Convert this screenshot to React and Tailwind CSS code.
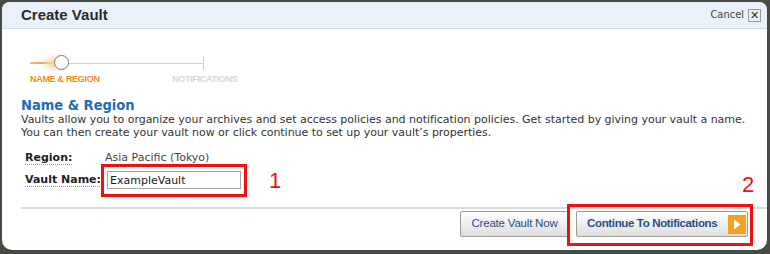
import React from 'react';

const font = { fontFamily: '"DejaVu Sans", sans-serif' };
const arial = { fontFamily: '"Liberation Sans", Arial, sans-serif' };
const cond = { fontFamily: '"DejaVu Sans Condensed", "DejaVu Sans", sans-serif' };

const Progress = () => (
  <div className="relative h-[40px] w-[240px]">
    <div className="absolute left-[9px] top-[12px] h-[2px] w-[26px] bg-gradient-to-r from-[#f7b77a] to-[#f08a1c]" />
    <div className="absolute left-[24px] top-[8px] h-[10px] w-[20px] rounded-full bg-[#fcd2a8] blur-[3px]" />
    <div className="absolute left-[47px] top-[13px] h-[1px] w-[136px] bg-[#cfcfcf]" />
    <div className="absolute left-[182px] top-[6px] h-[14px] w-[1px] bg-[#cfcfcf]" />
    <div className="absolute left-[33px] top-[5px] h-[15px] w-[15px] rounded-full border border-[#777] bg-white" />
    <div className="absolute left-[9px] top-[23px] text-[9px] font-bold tracking-[-0.3px] text-[#f0891c]" style={arial}>NAME &amp; REGION</div>
    <div className="absolute left-[151px] top-[23px] text-[9px] font-bold tracking-[-0.3px] text-[#d6d6d6]" style={arial}>NOTIFICATIONS</div>
  </div>
);

export default function App() {
  return (
    <div className="w-[770px] h-[254px] bg-[#4a4a44] pl-[2px] pr-[3px] pt-[2px] pb-[4px]">
      <div className="relative flex h-full flex-col overflow-hidden rounded-t-[8px] rounded-b-[10px] bg-white text-[#333]" style={font}>
        <div className="flex h-[27px] items-center justify-between border-b border-[#cfdcec] bg-[#e9f1fb] pl-[19px] pr-[6px]">
          <div className="text-[15px] font-bold text-[#2b2b2b]" style={arial}>Create Vault</div>
          <div className="flex items-center gap-[4px]">
            <span className="text-[11px] text-[#444]" style={cond}>Cancel</span>
            <span className="flex h-[13px] w-[13px] items-center justify-center border border-[#9a9a9a] bg-[#eee] text-[11px] leading-none text-[#333]">✕</span>
          </div>
        </div>

        <div className="pl-[19px] pt-[21px]">
          <Progress />
        </div>

        <div className="px-[19px] pt-[7px]">
          <h2 className="text-[14.5px] font-bold leading-[16px] text-[#1a6db5]" style={cond}>Name &amp; Region</h2>
          <p className="whitespace-nowrap text-[11px] leading-[13px] tracking-[-0.03px] text-[#333]">
            Vaults allow you to organize your archives and set access policies and notification policies. Get started by giving your vault a name.
            <br />
            You can then create your vault now or click continue to set up your vault’s properties.
          </p>
        </div>

        <div className="flex flex-col pl-[23px] pt-[12px]">
          <div className="flex h-[14px] items-center text-[11px] leading-[14px]">
            <span className="w-[80px] font-bold text-[#222] underline decoration-dotted decoration-[#999] underline-offset-[3px]">Region:</span>
            <span className="text-[#444]">Asia Pacific (Tokyo)</span>
          </div>
          <div className="-mt-[1px] flex items-center text-[11px]">
            <span className="w-[76px] whitespace-nowrap font-bold text-[#222] underline decoration-dotted decoration-[#999] underline-offset-[3px]">Vault Name:</span>
            <div className="border-[3px] border-[#ee1111] px-[3px] pt-[4px] pb-[5px]">
              <input
                readOnly
                value="ExampleVault"
                className="block h-[18px] w-[134px] border border-[#a8a8a8] px-[2px] text-[11px] text-[#222] outline-none"
                style={font}
              />
            </div>
            <span className="ml-[22px] text-[22px] leading-none text-[#ee1111]" style={arial}>1</span>
          </div>
        </div>

        <div className="ml-[19px] mt-[10px] h-[2px] bg-[#dcdcdc]" />

        <div className="flex justify-end gap-[7px] pr-[19px] pt-[2px]" style={arial}>
          <button className="h-[26px] w-[109px] rounded-[2px] border border-[#9c9c9c] bg-gradient-to-b from-white to-[#dedede] text-[11.5px] tracking-[-0.2px] text-[#1f4e8c]">Create Vault Now</button>
          <button className="flex h-[26px] w-[172px] items-center justify-between rounded-[2px] border border-[#9c9c9c] bg-gradient-to-b from-white to-[#dedede] pl-[10px] pr-[1px] text-[11.5px] font-bold tracking-[-0.35px] text-[#1f4e8c]">
            Continue To Notifications
            <span className="flex h-[19px] w-[18px] items-center justify-center bg-[#f6a21e]">
              <svg width="8" height="11" viewBox="0 0 8 11"><path d="M1 0.5 L7.5 5.5 L1 10.5 Z" fill="#fff" /></svg>
            </span>
          </button>
        </div>

        <div className="pointer-events-none absolute left-[565px] top-[202px] h-[42px] w-[186px] border-[3px] border-[#ee1111]" />
        <div className="pointer-events-none absolute left-[740px] top-[172px] text-[22px] leading-none text-[#ee1111]" style={arial}>2</div>
      </div>
    </div>
  );
}
